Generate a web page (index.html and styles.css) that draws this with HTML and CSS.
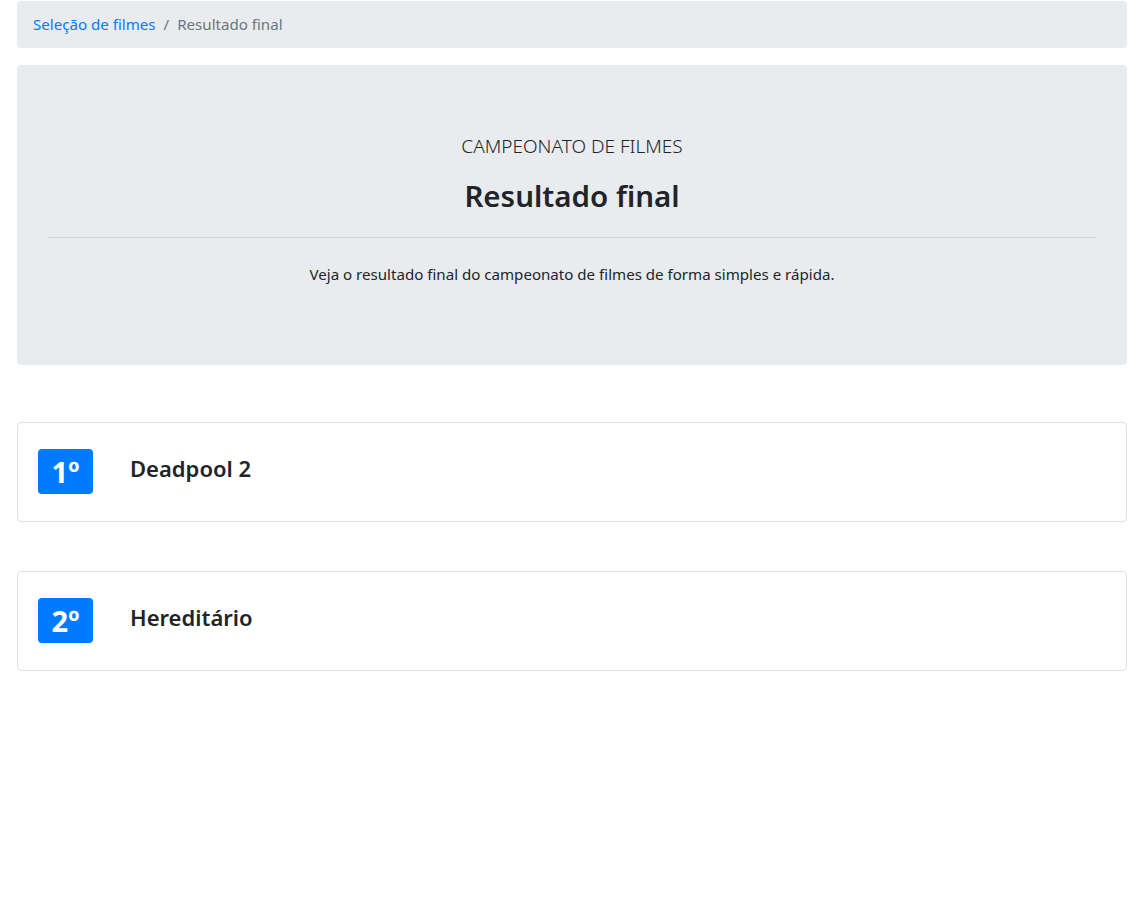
FILE: index.html
```html
<!DOCTYPE html>
<html lang="pt-BR">
<head>
<meta charset="utf-8">
<title>Resultado final</title>
<link rel="stylesheet" href="styles.css">
</head>
<body>
<div class="page">
  <nav class="breadcrumb">
    <a class="crumb-link" href="#">Seleção de filmes</a>
    <span class="crumb-sep">/</span>
    <span class="crumb-active">Resultado final</span>
  </nav>
  <section class="jumbotron">
    <p class="lead">CAMPEONATO DE FILMES</p>
    <h2 class="title">Resultado final</h2>
    <hr class="divider">
    <p class="desc">Veja o resultado final do campeonato de filmes de forma simples e rápida.</p>
  </section>
  <div class="results">
    <div class="card">
      <span class="badge">1º</span>
      <span class="movie">Deadpool 2</span>
    </div>
    <div class="card">
      <span class="badge">2º</span>
      <span class="movie">Hereditário</span>
    </div>
  </div>
</div>
</body>
</html>
```

FILE: styles.css
```css
* { box-sizing: border-box; }
html, body { margin: 0; padding: 0; background: #fff; }
body {
  font-family: "Noto Sans", "Open Sans", sans-serif;
  font-size: 15.1px;
  line-height: 1.5;
  color: #212529;
}
.page {
  margin: 1px 21px 0 17px;
}
.breadcrumb {
  display: flex;
  align-items: center;
  background: #e9ecef;
  border-radius: 4px;
  padding: 12px 16px;
  height: 47px;
  margin-bottom: 17px;
}
.crumb-link { color: #007bff; text-decoration: none; }
.crumb-sep { color: #6c757d; padding: 0 8px; }
.crumb-active { color: #6c757d; }
.jumbotron {
  background: #e9ecef;
  border-radius: 4px;
  padding: 66px 32px 0;
  height: 300px;
  text-align: center;
}
.lead {
  margin: 0 0 16px;
  font-size: 19px;
  font-weight: 300;
  line-height: 30px;
}
.title {
  margin: 0;
  font-size: 29.5px;
  font-weight: 600;
  line-height: 38px;
}
.divider {
  margin: 22px 0 24px;
  border: 0;
  border-top: 1px solid rgba(0,0,0,0.1);
}
.desc { margin: 0; font-size: 15.1px; line-height: 24px; }
.results {
  margin-top: 57px;
  display: flex;
  flex-direction: column;
  gap: 49px;
}
.card {
  display: flex;
  align-items: center;
  height: 100px;
  border: 1px solid rgba(0,0,0,0.125);
  border-radius: 4px;
  padding: 0 20px 1px;
}
.badge {
  display: inline-flex;
  align-items: center;
  justify-content: center;
  width: 55px;
  height: 45px;
  background: #007bff;
  color: #fff;
  border-radius: 4px;
  font-size: 29px;
  font-weight: 700;
  line-height: 1;
}
.movie {
  margin-left: 37px;
  margin-bottom: 6px;
  font-size: 22px;
  font-weight: 600;
}
```
